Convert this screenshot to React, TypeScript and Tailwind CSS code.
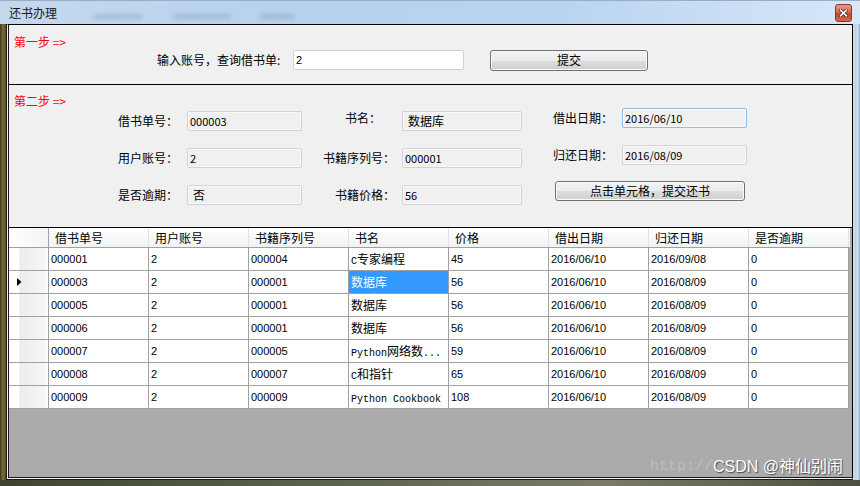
import React from 'react';

const cols = ['借书单号', '用户账号', '书籍序列号', '书名', '价格', '借出日期', '归还日期', '是否逾期'];
const rows: string[][] = [
  ['000001', '2', '000004', 'C专家编程', '45', '2016/06/10', '2016/09/08', '0'],
  ['000003', '2', '000001', '数据库', '56', '2016/06/10', '2016/08/09', '0'],
  ['000005', '2', '000001', '数据库', '56', '2016/06/10', '2016/08/09', '0'],
  ['000006', '2', '000001', '数据库', '56', '2016/06/10', '2016/08/09', '0'],
  ['000007', '2', '000005', 'Python网络数...', '59', '2016/06/10', '2016/08/09', '0'],
  ['000008', '2', '000007', 'C和指针', '65', '2016/06/10', '2016/08/09', '0'],
  ['000009', '2', '000009', 'Python Cookbook', '108', '2016/06/10', '2016/08/09', '0'],
];

function BookName({ text }: { text: string }) {
  const parts = text.match(/[\x00-\x7f]+|[^\x00-\x7f]+/g) || [];
  return (
    <span className="whitespace-pre">
      {parts.map((p, i) =>
        /^[\x00-\x7f]+$/.test(p) ? (
          <span key={i} className="font-['Liberation_Mono',monospace] text-[10px]">{p}</span>
        ) : (
          <span key={i} className="font-['Noto_Sans_CJK_SC',sans-serif] text-[12px]">{p}</span>
        )
      )}
    </span>
  );
}

function RoInput({ value, focus, cjk }: { value: string; focus?: boolean; cjk?: boolean }) {
  return (
    <div
      className={`h-[20px] flex items-center pl-[2px] rounded-[2px] border bg-[#f0f0f0] shadow-[inset_0_0_0_1px_#f9f9f9] ${
        focus ? 'border-[#8fbbe4]' : 'border-[#cfd3d8]'
      } ${cjk ? "font-['Noto_Sans_CJK_SC',sans-serif] text-[12px] pl-[5px]" : 'text-[11px]'}`}
    >
      {value}
    </div>
  );
}

function WinButton({ label, className }: { label: string; className: string }) {
  return (
    <div
      className={`flex items-center justify-center rounded-[3px] border border-[#707070] bg-[linear-gradient(#f2f2f2_0%,#ebebeb_50%,#dddddd_51%,#cfcfcf_100%)] shadow-[inset_0_0_0_1px_#fbfbfb] font-['Noto_Sans_CJK_SC',sans-serif] text-[12px] leading-[14px] ${className}`}
    >
      {label}
    </div>
  );
}

export default function App() {
  return (
    <div className="w-[860px] h-[486px] overflow-hidden flex flex-col bg-[#4b4a2c] font-['Liberation_Sans','Noto_Sans_CJK_SC',sans-serif] text-black">
      {/* title bar */}
      <div className="h-[24px] flex items-center bg-[linear-gradient(90deg,#c4d9ee_0%,#b6d1ed_35%,#b9d4f0_65%,#d6e7f8_100%)] border-t border-[#97aec6]">
        <span className="ml-[9px] font-['Noto_Sans_CJK_SC',sans-serif] text-[12px] leading-[14px] text-[#1a1a1a]">还书办理</span>
        <div className="ml-[36px] mt-[8px] w-[50px] h-[5px] rounded bg-[#7f97b0] opacity-40 blur-[2px]" />
        <div className="ml-[30px] mt-[8px] w-[58px] h-[5px] rounded bg-[#7f97b0] opacity-40 blur-[2px]" />
        <div className="ml-[28px] mt-[8px] w-[36px] h-[5px] rounded bg-[#7f97b0] opacity-40 blur-[2px]" />
        <div className="ml-auto mr-[8px] w-[17px] h-[18px] rounded-[3px] border border-[#7c3b2f] bg-[linear-gradient(#e99a86_0%,#d9694f_45%,#c7442a_55%,#d4664a_100%)] flex items-center justify-center">
          <svg width="9" height="8" viewBox="0 0 9 8">
            <path d="M1.5 1.2 L7.5 6.8 M7.5 1.2 L1.5 6.8" stroke="#3a2a28" strokeWidth="3.2" strokeLinecap="square" />
            <path d="M1.5 1.2 L7.5 6.8 M7.5 1.2 L1.5 6.8" stroke="#ffffff" strokeWidth="1.6" strokeLinecap="square" />
          </svg>
        </div>
      </div>

      <div className="flex h-[456px]">
        <div className="w-[6px] bg-[linear-gradient(90deg,#3a3921,#7d6e32_50%,#4f4a28)]" />
        <div className="w-[847px] flex flex-col bg-[#f0f0f0] border-double border-t border-t-black border-l-[3px] border-l-[#1a1a1a] border-b-[3px] border-b-[#1a1a1a] border-r border-r-black">
          {/* step 1 */}
          <div className="h-[60px] border-b border-black flex flex-col">
            <div className="pt-[10px] pl-[5px] font-['Noto_Sans_CJK_SC',sans-serif] text-[12px] leading-[14px] text-[#ff0000]">第一步 =&gt;</div>
            <div className="flex items-center h-[22px] pl-[148px]">
              <div className="w-[136px] font-['Noto_Sans_CJK_SC',sans-serif] text-[12px] leading-[14px]">输入账号，查询借书单:</div>
              <div className="w-[171px] h-[20px] flex items-center pl-[2px] bg-white border border-[#cdd3da] rounded-[2px] text-[11px]">2</div>
              <WinButton label="提交" className="ml-[26px] w-[158px] h-[21px]" />
            </div>
          </div>

          {/* step 2 */}
          <div className="h-[143px] border-b border-black flex flex-col">
            <div className="pt-[9px] pl-[5px] font-['Noto_Sans_CJK_SC',sans-serif] text-[12px] leading-[14px] text-[#ff0000]">第二步 =&gt;</div>
            <div className="flex flex-col gap-[13px] mt-[1px] pl-[109px] font-['Noto_Sans_CJK_SC',sans-serif] text-[12px] leading-[14px]">
              {/* row 1 */}
              <div className="flex items-center h-[24px]">
                <div className="w-[69px]">借书单号：</div>
                <div className="w-[115px]"><RoInput value="000003" /></div>
                <div className="w-[100px] pl-[43px] mb-[6px]">书名：</div>
                <div className="w-[120px]"><RoInput value="数据库" cjk /></div>
                <div className="flex items-center mb-[6px]">
                  <div className="w-[100px] pl-[31px]">借出日期：</div>
                  <div className="w-[125px]"><RoInput value="2016/06/10" focus /></div>
                </div>
              </div>
              {/* row 2 */}
              <div className="flex items-center h-[24px]">
                <div className="w-[69px]">用户账号：</div>
                <div className="w-[115px]"><RoInput value="2" /></div>
                <div className="w-[100px] pl-[21px]">书籍序列号：</div>
                <div className="w-[120px]"><RoInput value="000001" /></div>
                <div className="flex items-center mb-[7px]">
                  <div className="w-[100px] pl-[31px]">归还日期：</div>
                  <div className="w-[125px]"><RoInput value="2016/08/09" /></div>
                </div>
              </div>
              {/* row 3 */}
              <div className="flex items-center h-[24px]">
                <div className="w-[69px]">是否逾期：</div>
                <div className="w-[115px]"><RoInput value="否" cjk /></div>
                <div className="w-[100px] pl-[33px]">书籍价格：</div>
                <div className="w-[120px]"><RoInput value="56" /></div>
                <div className="flex items-center mb-[8px] pl-[33px]">
                  <WinButton label="点击单元格，提交还书" className="w-[190px] h-[20px]" />
                </div>
              </div>
            </div>
          </div>

          {/* grid */}
          <div className="flex-1 relative bg-[#ababab] flex flex-col">
            <div className="flex h-[20px] border-b border-[#a0a0a0] bg-[linear-gradient(#ffffff,#f1f2f4)] mr-[2px]">
              <div className="w-[40px] h-full border-r border-[#a0a0a0] bg-[linear-gradient(90deg,#ffffff_0%,#f4f4f4_100%)]" />
              {cols.map((c) => (
                <div
                  key={c}
                  className="w-[100px] h-full flex items-center pl-[6px] border-r border-[#dfe2e6] font-['Noto_Sans_CJK_SC',sans-serif] text-[12px] leading-[14px]"
                >
                  {c}
                </div>
              ))}
            </div>
            {rows.map((r, ri) => (
              <div key={ri} className="flex h-[23px] w-[840px] border-b border-[#a0a0a0]">
                <div className="w-[40px] h-full border-r border-[#a0a0a0] bg-[linear-gradient(90deg,#ffffff_0%,#ffffff_24%,#ececec_28%,#f7f7f7_92%,#ffffff_100%)] flex items-center pl-[8px]">
                  {ri === 1 && (
                    <svg width="5" height="8" viewBox="0 0 5 8">
                      <path d="M0 0 L4.5 4 L0 8 Z" fill="#000" />
                    </svg>
                  )}
                </div>
                {r.map((v, ci) => {
                  const sel = ri === 1 && ci === 3;
                  return (
                    <div
                      key={ci}
                      className={`w-[100px] h-full flex items-center pl-[2px] border-r border-[#a0a0a0] overflow-hidden whitespace-nowrap ${
                        sel ? 'bg-[#3399ff] text-white' : 'bg-white'
                      } ${ci === 3 ? '' : 'text-[11px]'}`}
                    >
                      {ci === 3 ? <BookName text={v} /> : v}
                    </div>
                  );
                })}
              </div>
            ))}
            <div className="absolute right-[9px] bottom-[1px] flex items-end leading-[18px]">
              <span className="font-['Liberation_Mono',monospace] text-[15px] text-[#bdbdbd]">http://</span>
              <span className="text-[16px] text-white [text-shadow:1px_1px_1px_#4a4a4a]">CSDN @神仙别闹</span>
            </div>
          </div>
        </div>
        <div className="w-[2px] bg-[#d8d8d8]" />
        <div className="w-[5px] bg-[linear-gradient(90deg,#b3cde8,#cfe2f5_50%,#8fb0d3)]" />
      </div>
      <div className="h-[6px] bg-[linear-gradient(90deg,#3e4430,#5c6450_40%,#7b7a68_70%,#4d5040)]" />
    </div>
  );
}
